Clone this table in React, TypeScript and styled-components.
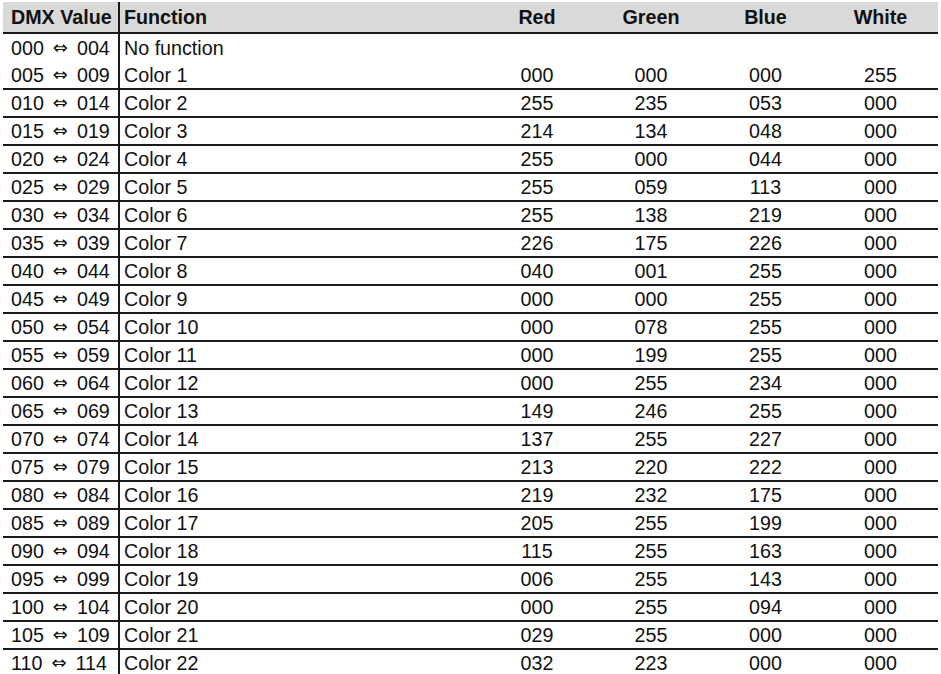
import React from 'react';
import styled, { createGlobalStyle } from 'styled-components';

const GlobalStyle = createGlobalStyle`
  html, body {
    margin: 0;
    padding: 0;
    background: #ffffff;
  }
  body {
    font-family: "Liberation Sans", Arial, sans-serif;
    color: #111111;
    overflow: hidden;
  }
`;

const Page = styled.div`
  padding: 2px 0 0 3px;
  width: 938px;
`;

const Table = styled.table`
  width: 935px;
  border-collapse: collapse;
  table-layout: fixed;
  font-size: 19.7px;
`;

const HeadRow = styled.tr`
  background: #d9d9d9;
  border-bottom: 2px solid #1a1a1a;
`;

const HeadCell = styled.th<{ $align?: string; $divider?: boolean }>`
  font-weight: bold;
  text-align: ${p => p.$align || 'center'};
  padding: 0;
  padding-left: ${p => (p.$divider ? '8px' : p.$align === 'left' ? '4px' : '0')};
  border-right: ${p => (p.$divider ? '2px solid #1a1a1a' : 'none')};
  vertical-align: middle;
  height: 30px;
  line-height: 30px;
  white-space: nowrap;
`;

// the first entry shares its block with the next one, so those two are a bit taller
const Row = styled.tr<{ $ruled: boolean; $lead: boolean }>`
  border-top: ${p => (p.$ruled ? '2px solid #1a1a1a' : 'none')};
  & > td {
    padding-top: ${p => (p.$lead ? '1px' : '0')};
    padding-bottom: 0;
  }
`;

const RangeCell = styled.td`
  padding: 0 0 0 8px;
  border-right: 2px solid #1a1a1a;
  white-space: nowrap;
  height: 26px;
  line-height: 26px;
  vertical-align: middle;
`;

const NameCell = styled.td`
  padding: 0 0 0 4px;
  white-space: nowrap;
  line-height: 26px;
  vertical-align: middle;
`;

const ValueCell = styled.td`
  padding: 0;
  text-align: center;
  line-height: 26px;
  vertical-align: middle;
`;

const Arrow = styled.span`
  font-family: "DejaVu Sans", sans-serif;
  font-size: 18px;
  line-height: 10px;
  margin: 0 9px;
  position: relative;
  top: -1px;
`;

type Entry = { from: string; to: string; name: string; rgbw?: [string, string, string, string] };

const entries: Entry[] = [
  { from: '000', to: '004', name: 'No function' },
  { from: '005', to: '009', name: 'Color 1', rgbw: ['000', '000', '000', '255'] },
  { from: '010', to: '014', name: 'Color 2', rgbw: ['255', '235', '053', '000'] },
  { from: '015', to: '019', name: 'Color 3', rgbw: ['214', '134', '048', '000'] },
  { from: '020', to: '024', name: 'Color 4', rgbw: ['255', '000', '044', '000'] },
  { from: '025', to: '029', name: 'Color 5', rgbw: ['255', '059', '113', '000'] },
  { from: '030', to: '034', name: 'Color 6', rgbw: ['255', '138', '219', '000'] },
  { from: '035', to: '039', name: 'Color 7', rgbw: ['226', '175', '226', '000'] },
  { from: '040', to: '044', name: 'Color 8', rgbw: ['040', '001', '255', '000'] },
  { from: '045', to: '049', name: 'Color 9', rgbw: ['000', '000', '255', '000'] },
  { from: '050', to: '054', name: 'Color 10', rgbw: ['000', '078', '255', '000'] },
  { from: '055', to: '059', name: 'Color 11', rgbw: ['000', '199', '255', '000'] },
  { from: '060', to: '064', name: 'Color 12', rgbw: ['000', '255', '234', '000'] },
  { from: '065', to: '069', name: 'Color 13', rgbw: ['149', '246', '255', '000'] },
  { from: '070', to: '074', name: 'Color 14', rgbw: ['137', '255', '227', '000'] },
  { from: '075', to: '079', name: 'Color 15', rgbw: ['213', '220', '222', '000'] },
  { from: '080', to: '084', name: 'Color 16', rgbw: ['219', '232', '175', '000'] },
  { from: '085', to: '089', name: 'Color 17', rgbw: ['205', '255', '199', '000'] },
  { from: '090', to: '094', name: 'Color 18', rgbw: ['115', '255', '163', '000'] },
  { from: '095', to: '099', name: 'Color 19', rgbw: ['006', '255', '143', '000'] },
  { from: '100', to: '104', name: 'Color 20', rgbw: ['000', '255', '094', '000'] },
  { from: '105', to: '109', name: 'Color 21', rgbw: ['029', '255', '000', '000'] },
  { from: '110', to: '114', name: 'Color 22', rgbw: ['032', '223', '000', '000'] },
];

const App = () => {
  return (
    <Page>
      <GlobalStyle />
      <Table>
        <colgroup>
          <col style={{ width: 116 }} />
          <col style={{ width: 361 }} />
          <col style={{ width: 114 }} />
          <col style={{ width: 114 }} />
          <col style={{ width: 115 }} />
          <col style={{ width: 115 }} />
        </colgroup>
        <thead>
          <HeadRow>
            <HeadCell $align="left" $divider>DMX Value</HeadCell>
            <HeadCell $align="left">Function</HeadCell>
            <HeadCell>Red</HeadCell>
            <HeadCell>Green</HeadCell>
            <HeadCell>Blue</HeadCell>
            <HeadCell>White</HeadCell>
          </HeadRow>
        </thead>
        <tbody>
          {entries.map((e, i) => (
            <Row key={e.from} $ruled={i > 1} $lead={i < 2}>
              <RangeCell>
                {e.from}
                <Arrow>⇔</Arrow>
                {e.to}
              </RangeCell>
              <NameCell>{e.name}</NameCell>
              {(e.rgbw || ['', '', '', '']).map((v, j) => (
                <ValueCell key={j}>{v}</ValueCell>
              ))}
            </Row>
          ))}
        </tbody>
      </Table>
    </Page>
  );
};

export default App;
